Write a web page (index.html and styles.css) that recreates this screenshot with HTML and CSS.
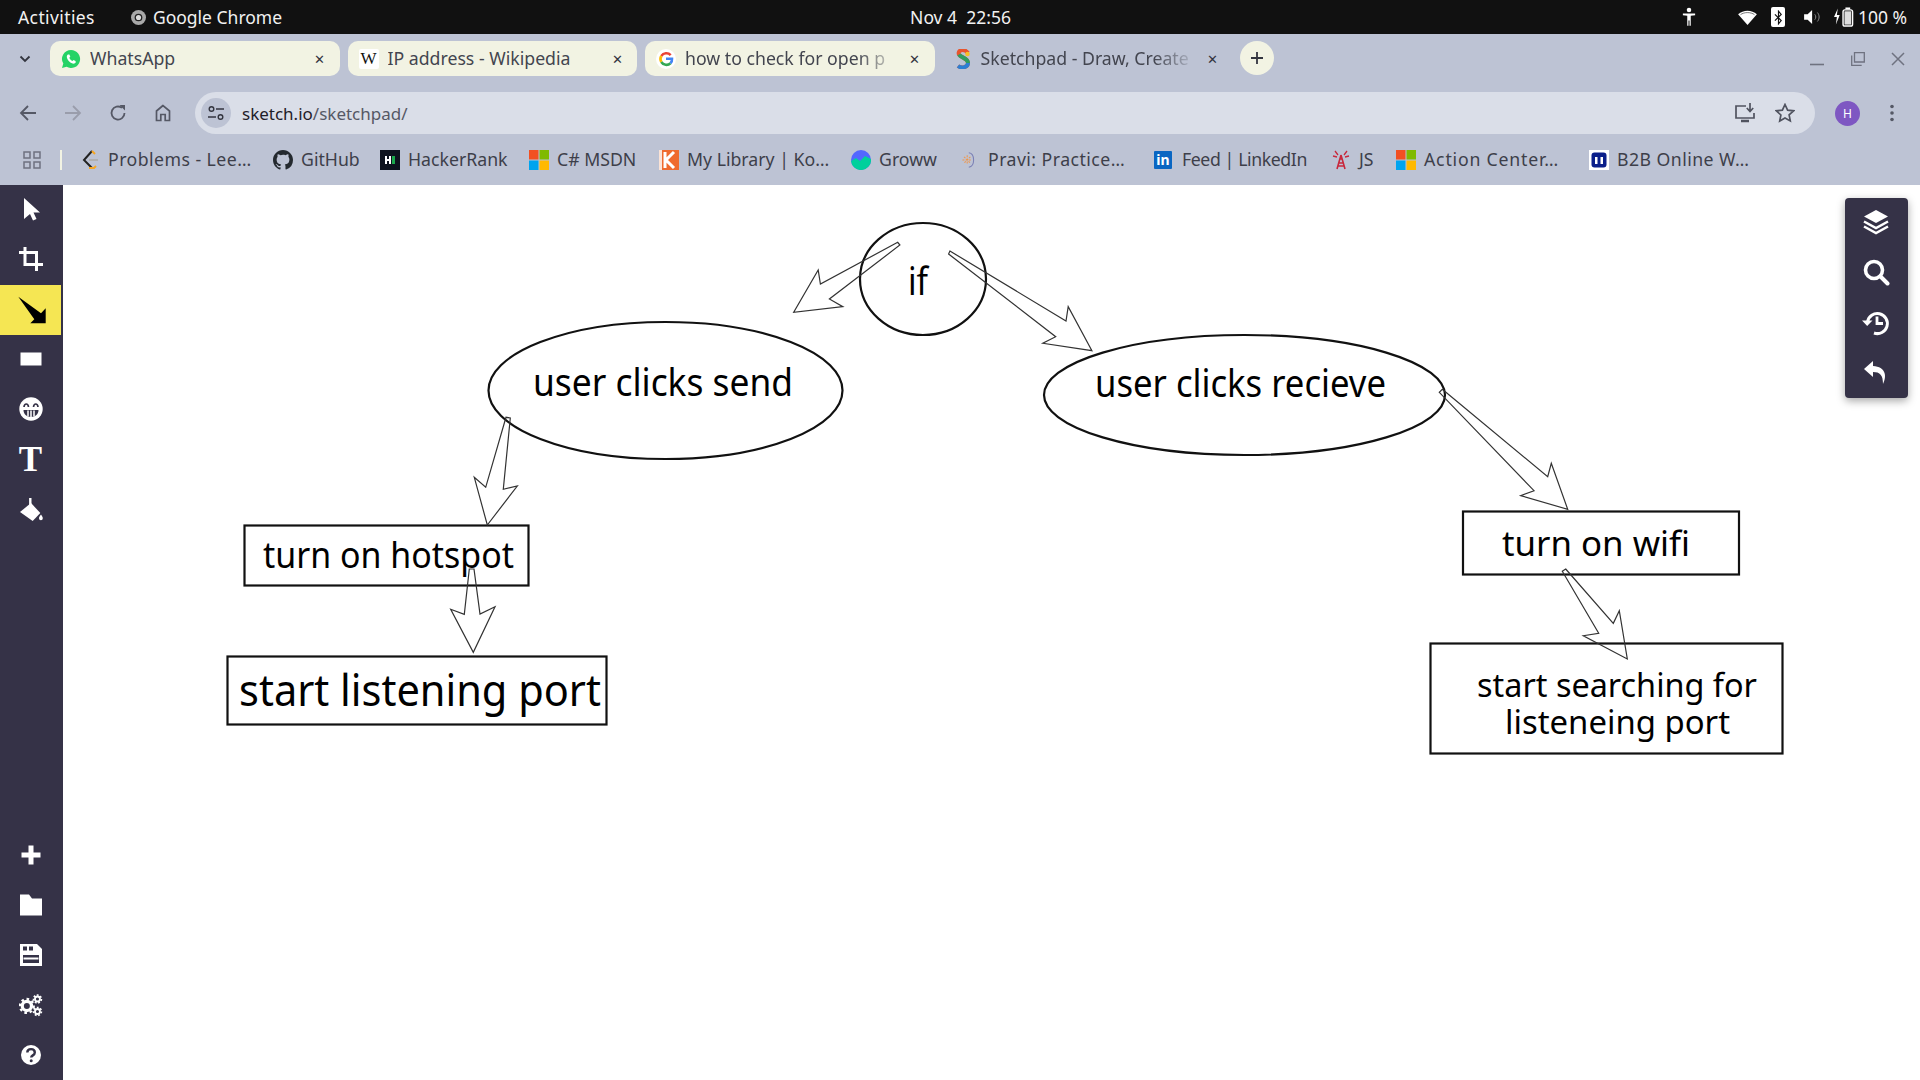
FILE: index.html
```html
<!DOCTYPE html>
<html lang="en">
<head>
    <meta charset="UTF-8">
    <title>Sketchpad - Draw, Create, Share!</title>
    <link rel="stylesheet" href="styles.css">
</head>
<body>

<!-- desktop top bar -->
<div class="topbar">
    <div class="topbar-left">
        <span class="activities">Activities</span>
        <span class="app-name">
            <svg class="chrome-mark" viewBox="0 0 14 14"><circle cx="7" cy="7" r="7" fill="#a9a9a9"/><circle cx="7" cy="7" r="3.6" fill="#222"/><circle cx="7" cy="7" r="2.4" fill="#ddd"/></svg>
            Google Chrome
        </span>
    </div>
    <div class="clock">Nov 4&nbsp; 22:56</div>
    <div class="status">
        <svg class="st-access" viewBox="0 0 16 22"><circle cx="8" cy="3" r="2.6" fill="#fff"/><path d="M1 7h14v2l-5 .6V21H8.6v-6H7.4v6H6V9.6L1 9z" fill="#fff"/></svg>
        <svg class="st-wifi" viewBox="0 0 20 16"><path d="M0 4.5C5.500 -.5 14.500 -.5 20 4.500L10 16z" fill="#fff"/><path d="M2.500 5C6.500 2 13.500 2 17.500 5" fill="none" stroke="#111" stroke-width=".6"/></svg>
        <span class="st-bt"><svg viewBox="0 0 10 16"><path d="M1 4.500l7 7L5 15V1l3 3.500-7 7" fill="none" stroke="#111" stroke-width="1.300"/></svg></span>
        <svg class="st-vol" viewBox="0 0 20 18"><path d="M0 6h4l5-5v16l-5-5H0z" fill="#fff"/><path d="M12 6c1.500 2 1.500 4 0 6M15 4c2.500 3 2.500 7 0 10" fill="none" stroke="#999" stroke-width="1"/></svg>
        <svg class="st-bat" viewBox="0 0 21 20"><path d="M4 1L0 10h3l-1 8 4-10H3z" fill="#fff"/><rect x="9.500" y="2.500" width="10" height="17" rx="2" fill="none" stroke="#fff" stroke-width="1.500"/><rect x="12" y="0" width="5" height="2" fill="#fff"/><rect x="11" y="4" width="7" height="14" fill="#ddd"/></svg>
        <span class="battery-text">100 %</span>
    </div>
</div>

<!-- tabs -->
<div class="tabstrip">
    <div class="tab-menu">
        <svg viewBox="0 0 12 8"><path d="M1.500 1.500L6 6l4.500-4.500" fill="none" stroke="#33353f" stroke-width="1.800"/></svg>
    </div>
    <div class="tab">
        <svg class="tab-icon" viewBox="0 0 20 20"><path d="M10 1a9 9 0 0 0-7.700 13.600L1 19l4.600-1.200A9 9 0 1 0 10 1z" fill="#25d366"/><path d="M7 5.500c-1 .6-1.500 2-1 3.400 1 2.700 3 4.800 5.600 5.700 1.400.4 2.700-.2 3.200-1.300l-.3-1.400-2-1-1 1.100c-1.400-.6-2.600-1.800-3.200-3.200l1-1-.9-2.200z" fill="#fff"/></svg>
        <span class="tab-title">WhatsApp</span>
        <span class="tab-close">✕</span>
    </div>
    <div class="tab">
        <span class="tab-icon wiki-icon">W</span>
        <span class="tab-title">IP address - Wikipedia</span>
        <span class="tab-close">✕</span>
    </div>
    <div class="tab">
        <svg class="tab-icon" viewBox="0 0 20 20"><circle cx="10" cy="10" r="10" fill="#fff"/><path d="M14.700 6.200A6 6 0 0 0 5.300 7" fill="none" stroke="#ea4335" stroke-width="2.600"/><path d="M5.300 7a6 6 0 0 0 0 6" fill="none" stroke="#fbbc05" stroke-width="2.600"/><path d="M5.300 13a6 6 0 0 0 9.200 1.200" fill="none" stroke="#34a853" stroke-width="2.600"/><path d="M10 9.800h6c.1 1.900-.4 3.400-1.500 4.400" fill="none" stroke="#4285f4" stroke-width="2.600"/></svg>
        <span class="tab-title fade">how to check for open p</span>
        <span class="tab-close">✕</span>
    </div>
    <div class="tab tab-active">
        <svg class="tab-icon sketch-icon" viewBox="0 0 16 20"><path d="M13 4C9-1 2 1 4 5.500c2 3.500 9 3.500 9 8.500 0 4-6 6-10 3" fill="none" stroke="#e8552d" stroke-width="4"/><path d="M4 5.500c2 3.500 9 3.500 9 8.500" fill="none" stroke="#2f9e5f" stroke-width="4"/><path d="M13 14c0 4-6 6-10 3" fill="none" stroke="#2d7fd3" stroke-width="4"/><circle cx="12.500" cy="5" r="2.300" fill="#f6c026"/></svg>
        <span class="tab-title fade">Sketchpad - Draw, Create</span>
        <span class="tab-close">✕</span>
    </div>
    <div class="new-tab">
        <svg viewBox="0 0 14 14"><path d="M7 1v12M1 7h12" stroke="#33353f" stroke-width="1.800"/></svg>
    </div>
    <div class="window-controls">
        <svg class="win-min" viewBox="0 0 14 14"><path d="M0 12.500h14" stroke="#6f7280" stroke-width="1.600"/></svg>
        <svg class="win-max" viewBox="0 0 14 14"><path d="M3.500 .7h9.800v9.300H3.500zM.7 3.500v9.800h10" fill="none" stroke="#6f7280" stroke-width="1.300"/></svg>
        <svg class="win-close" viewBox="0 0 14 14"><path d="M1 1l12 12M13 1L1 13" stroke="#6f7280" stroke-width="1.500"/></svg>
    </div>
</div>

<!-- back / forward / address bar -->
<div class="toolbar">
    <div class="nav-icons">
        <svg viewBox="0 0 18 18"><path d="M17 9H2M9 2L2 9l7 7" fill="none" stroke="#555865" stroke-width="1.800"/></svg>
        <svg viewBox="0 0 18 18"><path d="M1 9h15M9 2l7 7-7 7" fill="none" stroke="#9a9dab" stroke-width="1.800"/></svg>
        <svg viewBox="0 0 18 18"><path d="M15.500 9A6.500 6.500 0 1 1 13 3.900" fill="none" stroke="#555865" stroke-width="1.800"/><path d="M10.500 1h5.500v5.500z" fill="#555865"/></svg>
        <svg viewBox="0 0 18 18"><path d="M9 1.500L2.500 7v9.500h4.300v-6h4.400v6h4.300V7z" fill="none" stroke="#555865" stroke-width="1.700"/></svg>
    </div>
    <div class="address">
        <span class="site-btn">
            <svg viewBox="0 0 16 16"><circle cx="3.500" cy="4" r="2.300" fill="none" stroke="#33353f" stroke-width="1.400"/><path d="M8 4h8M0 12h8" stroke="#33353f" stroke-width="1.400"/><circle cx="12.500" cy="12" r="2.300" fill="none" stroke="#33353f" stroke-width="1.400"/></svg>
        </span>
        <span class="url"><span class="url-host">sketch.io</span>/sketchpad/</span>
        <div class="address-end">
            <svg viewBox="0 0 20 20"><path d="M11 3H1v12h18v-5" fill="none" stroke="#50535f" stroke-width="1.700"/><path d="M6 18h8" stroke="#50535f" stroke-width="2.500"/><path d="M15 0v8M11.800 5l3.200 3.500L18.200 5" fill="none" stroke="#50535f" stroke-width="1.700"/></svg>
            <svg viewBox="0 0 20 20"><path d="M10 1.500l2.600 5.600 6 .7-4.500 4.100 1.200 6L10 15l-5.300 3 1.200-6L1.400 7.800l6-.7z" fill="none" stroke="#50535f" stroke-width="1.700"/></svg>
        </div>
    </div>
    <div class="toolbar-end">
        <span class="avatar">H</span>
        <svg class="kebab" viewBox="0 0 4 18"><circle cx="2" cy="2.500" r="1.800" fill="#555865"/><circle cx="2" cy="9" r="1.800" fill="#555865"/><circle cx="2" cy="15.500" r="1.800" fill="#555865"/></svg>
    </div>
</div>

<!-- bookmarks -->
<div class="bookmarks">
    <svg class="apps" viewBox="0 0 18 18"><path d="M1 1h6v6H1zM11 1h6v6h-6zM1 11h6v6H1zM11 11h6v6h-6z" fill="none" stroke="#6f7280" stroke-width="1.500"/></svg>
    <span class="bm-sep"></span>
    <div class="bm-list">
        <div class="bm">
            <svg class="bm-icon" viewBox="0 0 20 20"><path d="M12 1L4 10l8 8" fill="none" stroke="#222" stroke-width="2"/><path d="M12 1l3 3M9 18h5l2-2" fill="none" stroke="#f5a623" stroke-width="2"/><path d="M9 10h9" stroke="#b0b0b0" stroke-width="2"/></svg>
            <span class="bm-wide">Problems - Lee…</span>
        </div>
        <div class="bm">
            <svg class="bm-icon" viewBox="0 0 16 16"><path d="M8 0C3.580 0 0 3.580 0 8c0 3.540 2.290 6.530 5.470 7.590.4.070.55-.17.55-.38v-1.340c-2.230.48-2.700-1.070-2.700-1.070-.36-.92-.89-1.170-.89-1.170-.73-.5.050-.49.050-.49.800.060 1.230.830 1.230.830.710 1.220 1.870.870 2.330.660.070-.520.280-.870.510-1.070-1.780-.200-3.640-.890-3.640-3.950 0-.870.310-1.590.820-2.150-.080-.200-.360-1.020.080-2.120 0 0 .670-.210 2.200.820A7.700 7.700 0 0 1 8 3.870c.680 0 1.360.090 2 .270 1.530-1.040 2.200-.820 2.200-.820.440 1.100.160 1.920.080 2.120.510.560.820 1.270.820 2.150 0 3.070-1.870 3.750-3.650 3.950.290.250.540.730.540 1.480v2.190c0 .210.150.460.550.380A8 8 0 0 0 16 8c0-4.420-3.580-8-8-8z" fill="#24292f"/></svg>
            <span>GitHub</span>
        </div>
        <div class="bm">
            <svg class="bm-icon" viewBox="0 0 20 20"><rect width="20" height="20" fill="#0e141e"/><path d="M5 6h2v3h2V6h2v8H9v-3H7v3H5z" fill="#fff"/><rect x="12" y="6" width="3" height="8" fill="#1ba94c"/></svg>
            <span>HackerRank</span>
        </div>
        <div class="bm">
            <svg class="bm-icon" viewBox="0 0 20 20"><rect width="9.500" height="9.500" fill="#f25022"/><rect x="10.500" width="9.500" height="9.500" fill="#7fba00"/><rect y="10.500" width="9.500" height="9.500" fill="#00a4ef"/><rect x="10.500" y="10.500" width="9.500" height="9.500" fill="#ffb900"/></svg>
            <span>C# MSDN</span>
        </div>
        <div class="bm">
            <svg class="bm-icon" viewBox="0 0 20 20"><rect width="20" height="20" fill="#ef6a2e"/><rect width="3" height="20" fill="#fbe3d6"/><path d="M6 2v16M15 2l-8 8 8 8" fill="none" stroke="#fff" stroke-width="3"/></svg>
            <span>My Library | Ko…</span>
        </div>
        <div class="bm">
            <svg class="bm-icon" viewBox="0 0 20 20"><circle cx="10" cy="10" r="10" fill="#5367ff"/><path d="M0 11l5-3 4 3 5-5 6 3a10 10 0 0 1-20 2z" fill="#00d09c"/></svg>
            <span>Groww</span>
        </div>
        <div class="bm bm-pravi">
            <svg class="bm-icon" viewBox="0 0 20 20"><path d="M11 1c8 1 8 17 0 18" fill="none" stroke="#7a7fb5" stroke-width="1.300"/><path d="M9 4v12M3 10h12M5 6l8 8M13 6l-8 8" stroke="#f0964a" stroke-width="1.300" stroke-dasharray="2.500 1.500"/></svg>
            <span class="bm-wide">Pravi: Practice…</span>
        </div>
        <div class="bm">
            <span class="bm-icon linkedin-icon">in</span>
            <span class="bm-tight">Feed | LinkedIn</span>
        </div>
        <div class="bm">
            <svg class="bm-icon" viewBox="0 0 20 20"><path d="M10 5l-4 14M10 5l4 14M7.500 13h5M7 16h6M8.500 9h3" fill="none" stroke="#c8283c" stroke-width="1.600"/><path d="M4 1l3 4M16 1l-3 4M2 6l4 1M18 6l-4 1" stroke="#c8283c" stroke-width="1.300"/></svg>
            <span>JS</span>
        </div>
        <div class="bm">
            <svg class="bm-icon" viewBox="0 0 20 20"><rect width="9.500" height="9.500" fill="#f25022"/><rect x="10.500" width="9.500" height="9.500" fill="#7fba00"/><rect y="10.500" width="9.500" height="9.500" fill="#00a4ef"/><rect x="10.500" y="10.500" width="9.500" height="9.500" fill="#ffb900"/></svg>
            <span class="bm-wider">Action Center…</span>
        </div>
        <div class="bm">
            <svg class="bm-icon" viewBox="0 0 20 20"><rect width="20" height="20" fill="#fff"/><rect x="2.500" y="2.500" width="15" height="15" rx="3" fill="#0b1f8a"/><path d="M6 14V7h2.500v7M11.500 14V7H14v7" fill="#fff"/></svg>
            <span class="bm-wide">B2B Online W…</span>
        </div>
    </div>
</div>

<!-- sketchpad -->
<div class="app">
    <div class="sidebar">
        <div class="tool-group tools-top">
            <div class="tool">
                <svg viewBox="0 0 24 24"><path d="M5 1l16 14.500h-6.500l3 6.500-3.500 1.500-3-6.500L5 22z" fill="#fff"/></svg>
            </div>
            <div class="tool">
                <svg viewBox="0 0 24 24"><path d="M0 5.500h17.500V24M6 0v17.500h18" fill="none" stroke="#fff" stroke-width="3"/></svg>
            </div>
            <div class="tool tool-active">
                <svg class="tool-arrow" viewBox="0 0 30 30"><path d="M2.300 1.700L25 18.300l4.700-5v15H14.300l4-4z" fill="#000"/></svg>
            </div>
            <div class="tool">
                <svg viewBox="0 0 24 24"><rect x="1.500" y="5.500" width="21" height="13" fill="#fff"/></svg>
            </div>
            <div class="tool">
                <svg viewBox="0 0 24 24"><circle cx="12" cy="12" r="11.700" fill="#fff"/><path d="M5 10c.5-4 4-4 4.500 0M14.500 10c.5-4 4-4 4.500 0" fill="none" stroke="#353247" stroke-width="1.700"/><path d="M4.500 13h15c0 4-3 7-7.500 7s-7.500-3-7.500-7z" fill="#353247"/><path d="M9 13.500v6M12 13.500v6.500M15 13.500v6" stroke="#fff" stroke-width="1.500"/></svg>
            </div>
            <div class="tool tool-text">T</div>
            <div class="tool">
                <svg viewBox="0 0 24 24"><path d="M1 15l11-9 9.300 10-7.600 8z" fill="#fff"/><path d="M11.300 1v12" stroke="#fff" stroke-width="2.400"/><path d="M22 17.500c1.300 1.800 1.800 2.700 1.800 3.800a1.900 1.900 0 0 1-3.800 0c0-1.100.5-2 2-3.800z" fill="#fff"/></svg>
            </div>
        </div>
        <div class="tool-group">
            <div class="tool">
                <svg viewBox="0 0 24 24"><path d="M12 2.500v19M2.500 12h19" stroke="#fff" stroke-width="5"/></svg>
            </div>
            <div class="tool">
                <svg viewBox="0 0 24 24"><path d="M1 1.500h9l3 4h10v17H1z" fill="#fff"/></svg>
            </div>
            <div class="tool">
                <svg viewBox="0 0 24 24"><path d="M1 1h17l5 5v17H1z" fill="#fff"/><path d="M4 3.500h4v4H4zM10 3.500h4v4h-4z" fill="#353247"/><path d="M4 12h16v8H4z" fill="#353247"/><path d="M4.500 15.500h15" stroke="#fff" stroke-width="2"/></svg>
            </div>
            <div class="tool">
                <svg viewBox="0 0 26 24"><g fill="none" stroke="#fff"><circle cx="8.500" cy="13" r="5" stroke-width="3.500"/><circle cx="8.500" cy="13" r="7.500" stroke-width="2.500" stroke-dasharray="2.800 3"/><circle cx="20" cy="5.500" r="2.700" stroke-width="2"/><circle cx="20" cy="5.500" r="4.300" stroke-width="1.800" stroke-dasharray="2 1.800"/><circle cx="20" cy="19" r="2.700" stroke-width="2"/><circle cx="20" cy="19" r="4.300" stroke-width="1.800" stroke-dasharray="2 1.800"/></g></svg>
            </div>
            <div class="tool">
                <svg viewBox="0 0 24 24"><circle cx="12" cy="12" r="10" fill="#fff"/><path d="M8.300 9.500c0-4.500 7.500-4.500 7.500 0 0 3-3.600 2.700-3.600 5" fill="none" stroke="#353247" stroke-width="2.400"/><circle cx="12.200" cy="17.800" r="1.500" fill="#353247"/></svg>
            </div>
        </div>
    </div>

    <div class="canvas">
        <svg class="diagram" viewBox="63 185 1857 895">
            <ellipse class="shape" cx="923" cy="279" rx="63" ry="56"/>
            <ellipse class="shape" cx="665.500" cy="390.500" rx="177" ry="68.500"/>
            <ellipse class="shape" cx="1244.500" cy="395" rx="200.500" ry="60"/>
            <rect class="shape" x="244.500" y="525.500" width="284" height="60"/>
            <rect class="shape" x="227.500" y="656.500" width="379" height="68"/>
            <rect class="shape" x="1463" y="511.500" width="276" height="63"/>
            <rect class="shape" x="1430.500" y="643.500" width="352" height="110"/>

            <polygon class="arrow" points="897.700,242.300 820.400,284 818.200,270 793.700,312.300 842.800,306.700 829.400,299 899.900,245"/>
            <polygon class="arrow" points="949.900,251 1066,321 1068.200,306.700 1091.900,350.700 1042.800,343.300 1055.700,336.700 948.600,254"/>
            <polygon class="arrow" points="510.300,418 503.300,489.300 517.300,486 487.300,525 474.300,477.300 485.700,487.300 506,417.300"/>
            <polygon class="arrow" points="474,569 480,614 495,606.700 473.300,652.300 450.700,609.300 464.300,614.300 469.300,569"/>
            <polygon class="arrow" points="1442.300,389.300 1547.700,476.700 1551.300,463.300 1567.700,509.300 1520.700,495.700 1534,490.700 1439.300,392.300"/>
            <polygon class="arrow" points="1565.700,569 1613.300,623.300 1619.300,610.700 1627.300,659 1583.300,635.700 1598.700,633.300 1562.300,571.300"/>

            <text class="label label-38" x="908" y="295" textLength="20" lengthAdjust="spacingAndGlyphs">if</text>
            <text class="label label-38" x="533" y="396" textLength="260" lengthAdjust="spacingAndGlyphs">user clicks send</text>
            <text class="label label-38" x="1095" y="397" textLength="291" lengthAdjust="spacingAndGlyphs">user clicks recieve</text>
            <text class="label label-36" x="263" y="568" textLength="251" lengthAdjust="spacingAndGlyphs">turn on hotspot</text>
            <text class="label label-43" x="239" y="706" textLength="362" lengthAdjust="spacingAndGlyphs">start listening port</text>
            <text class="label label-35" x="1502" y="556" textLength="188" lengthAdjust="spacingAndGlyphs">turn on wifi</text>
            <text class="label label-33" x="1477" y="697" textLength="280" lengthAdjust="spacingAndGlyphs">start searching for</text>
            <text class="label label-33" x="1505" y="734" textLength="225" lengthAdjust="spacingAndGlyphs">listeneing port</text>
        </svg>

        <div class="side-panel">
            <svg viewBox="0 0 28 28"><path d="M14 2l12 6.500L14 15 2 8.500z" fill="#fff"/><path d="M2 13.500L14 20l12-6.500M2 18.500L14 25l12-6.500" fill="none" stroke="#fff" stroke-width="2.500"/></svg>
            <svg viewBox="0 0 28 28"><circle cx="12" cy="12" r="8.500" fill="none" stroke="#fff" stroke-width="3.600"/><path d="M18.500 18.500L25.500 25.500" stroke="#fff" stroke-width="4" stroke-linecap="round"/></svg>
            <svg viewBox="0 0 28 28"><path d="M5.500 13A10 10 0 1 1 12 24" fill="none" stroke="#fff" stroke-width="3"/><path d="M0 11.500h10.500L5.200 17z" fill="#fff"/><path d="M15 7.500v7h6" fill="none" stroke="#fff" stroke-width="2.800"/></svg>
            <svg viewBox="0 0 28 28"><path d="M11 2L2 10l9 8v-5c7 0 10 3 10 12 4-8 3-17-10-18z" fill="#fff"/></svg>
        </div>
    </div>
</div>

</body>
</html>
```

FILE: styles.css
```css
* {
    box-sizing: border-box;
}

html, body {
    margin: 0;
    height: 100%;
    overflow: hidden;
}

body {
    font-family: "Noto Sans", sans-serif;
    background-color: #fff;
    display: flex;
    flex-direction: column;
    height: 1080px;
}

/* desktop top bar */
.topbar {
    height: 34px;
    background-color: #111;
    color: #f2f2f2;
    font-size: 17.5px;
    display: grid;
    grid-template-columns: 1fr auto 1fr;
    align-items: center;
    padding: 0 13px 0 18px;
}

.topbar-left {
    display: flex;
    align-items: center;
    gap: 36px;
}

.activities {
    letter-spacing: 0.4px;
}

.app-name {
    display: flex;
    align-items: center;
    gap: 7px;
}

.chrome-mark {
    width: 15px;
    height: 15px;
}

.clock {
    width: 202px;
    margin-left: -4px;
    text-align: center;
}

.status {
    display: flex;
    align-items: center;
    justify-content: flex-end;
}

.st-access {
    width: 14px;
    height: 20px;
    margin-right: 42px;
}

.st-wifi {
    width: 19px;
    height: 15px;
    margin-right: 14px;
}

.st-bt {
    width: 14px;
    height: 20px;
    background-color: #fff;
    border-radius: 2px;
    margin-right: 19px;
    display: flex;
    align-items: center;
    justify-content: center;
}

.st-bt svg {
    width: 9px;
    height: 15px;
}

.st-vol {
    width: 18px;
    height: 16px;
    margin-right: 11.500px;
}

.st-bat {
    width: 20px;
    height: 20px;
    margin-right: 4px;
}

/* tabs */
.tabstrip {
    height: 58px;
    background-color: #bdc3d4;
    display: flex;
    align-items: flex-start;
    padding-top: 7px;
    gap: 8px;
    color: #43454f;
    font-size: 17.7px;
}

.tab-menu {
    width: 42px;
    height: 35px;
    display: flex;
    align-items: center;
    justify-content: center;
}

.tab-menu svg {
    width: 12px;
    height: 8px;
    margin-left: 8px;
}

.tab {
    width: 289.500px;
    height: 35px;
    background-color: #f2f3e3;
    border-radius: 10px;
    display: flex;
    align-items: center;
    padding: 0 13px 0 11px;
}

.tab-active {
    background-color: transparent;
    padding-left: 12px;
}

.tab-icon {
    flex: none;
    width: 20px;
    height: 20px;
    margin-right: 9px;
}

.sketch-icon {
    width: 16px;
    margin-right: 10px;
}

.wiki-icon {
    background-color: #fff;
    color: #111;
    font-family: "Liberation Serif", serif;
    font-size: 17px;
    line-height: 20px;
    text-align: center;
    border-radius: 2px;
}

.tab-title {
    flex: 1;
    white-space: nowrap;
    overflow: hidden;
    padding-bottom: 2px;
}

.fade {
    -webkit-mask-image: linear-gradient(to right, #000 80%, transparent 100%);
    mask-image: linear-gradient(to right, #000 80%, transparent 100%);
}

.tab-close {
    flex: none;
    width: 14px;
    margin-left: 8px;
    font-size: 13px;
    text-align: center;
    color: #33353f;
}

.new-tab {
    width: 34px;
    height: 34px;
    background-color: #f2f3e3;
    border-radius: 50%;
    display: flex;
    align-items: center;
    justify-content: center;
}

.new-tab svg {
    width: 14px;
    height: 14px;
}

.window-controls {
    margin-left: auto;
    display: flex;
    align-items: center;
    gap: 26.500px;
    height: 35px;
    padding-right: 15px;
}

.window-controls svg {
    width: 14px;
    height: 14px;
}

/* toolbar */
.toolbar {
    height: 42px;
    background-color: #bdc3d4;
    display: flex;
    align-items: center;
}

.nav-icons {
    width: 195px;
    display: flex;
    align-items: center;
    gap: 27px;
    padding-left: 19px;
}

.nav-icons svg {
    width: 18px;
    height: 18px;
}

.address {
    width: 1620px;
    height: 42px;
    background-color: #dadee8;
    border-radius: 21px;
    display: flex;
    align-items: center;
    padding-left: 6px;
    font-size: 17px;
    color: #555865;
}

.site-btn {
    width: 30px;
    height: 30px;
    background-color: #bdc3d4;
    border-radius: 50%;
    display: flex;
    align-items: center;
    justify-content: center;
    margin-right: 11px;
}

.site-btn svg {
    width: 16px;
    height: 16px;
}

.url-host {
    color: #1f2029;
}

.address-end {
    margin-left: auto;
    display: flex;
    align-items: center;
    gap: 20px;
    padding-right: 20px;
}

.address-end svg {
    width: 20px;
    height: 20px;
}

.toolbar-end {
    flex: 1;
    display: flex;
    align-items: center;
    padding-left: 20px;
    gap: 30px;
}

.avatar {
    width: 25px;
    height: 25px;
    background-color: #7e57c2;
    color: #fff;
    border-radius: 50%;
    font-size: 12px;
    line-height: 25px;
    text-align: center;
}

.kebab {
    width: 4px;
    height: 18px;
}

/* bookmarks */
.bookmarks {
    height: 51px;
    background-color: #bdc3d4;
    display: flex;
    align-items: center;
    color: #3d3f4a;
    font-size: 17.7px;
    padding-left: 23px;
}

.apps {
    width: 18px;
    height: 18px;
}

.bm-sep {
    width: 2px;
    height: 20px;
    background-color: #f2f3e3;
    margin-left: 19px;
    margin-right: 18px;
}

.bm-list {
    display: grid;
    grid-template-columns: 193px 107px 149px 130px 192px 109px 194px 177px 65px 193px auto;
    align-items: center;
}

.bm {
    display: flex;
    align-items: center;
    gap: 8px;
    white-space: nowrap;
}

.bm span {
    padding-bottom: 2px;
}

.bm-wide {
    letter-spacing: 0.45px;
}

.bm-wider {
    letter-spacing: 0.8px;
}

.bm-tight {
    letter-spacing: -0.4px;
}

.bm-pravi {
    gap: 12px;
}

.bm-icon {
    flex: none;
    width: 20px;
    height: 20px;
}

.bm-pravi .bm-icon {
    width: 16px;
}

.bm .linkedin-icon {
    width: 18px;
    height: 18px;
    margin-right: 2px;
    padding-bottom: 0;
    background-color: #0a66c2;
    color: #fff;
    font-weight: 700;
    font-size: 14px;
    line-height: 18px;
    text-align: center;
    border-radius: 1px;
}

/* sketchpad */
.app {
    flex: 1;
    display: flex;
    min-height: 0;
}

.sidebar {
    width: 63px;
    background-color: #353247;
    padding-right: 2px;
    display: flex;
    flex-direction: column;
    justify-content: space-between;
}

.tool {
    height: 50px;
    display: flex;
    align-items: center;
    justify-content: center;
}

.tool svg {
    width: 24px;
    height: 24px;
}

.tools-top .tool svg {
    margin-top: -2px;
}

.tool-active {
    background-color: #f5e653;
}

.tools-top .tool svg.tool-arrow {
    width: 30px;
    height: 30px;
    margin-top: 0;
}

.tool-text {
    color: #fff;
    font-family: "Liberation Serif", serif;
    font-weight: 700;
    font-size: 35px;
}

.canvas {
    flex: 1;
    position: relative;
}

.diagram {
    display: block;
    width: 100%;
    height: 100%;
}

.shape {
    fill: none;
    stroke: #111;
    stroke-width: 2.200;
}

.arrow {
    fill: none;
    stroke: #333;
    stroke-width: 1.200;
}

.label {
    font-family: "Noto Sans", sans-serif;
    fill: #000;
}

.label-33 {
    font-size: 33px;
}

.label-35 {
    font-size: 35px;
}

.label-36 {
    font-size: 36px;
}

.label-38 {
    font-size: 38px;
}

.label-43 {
    font-size: 43px;
}

.side-panel {
    position: absolute;
    top: 13px;
    right: 12px;
    width: 63px;
    height: 200px;
    background-color: #353247;
    border-radius: 4px;
    box-shadow: 0 3px 8px rgba(0, 0, 0, 0.35);
    display: flex;
    flex-direction: column;
    align-items: center;
    justify-content: space-between;
    padding: 10px 2px 11px 0;
}

.side-panel svg {
    width: 28px;
    height: 28px;
}
```
